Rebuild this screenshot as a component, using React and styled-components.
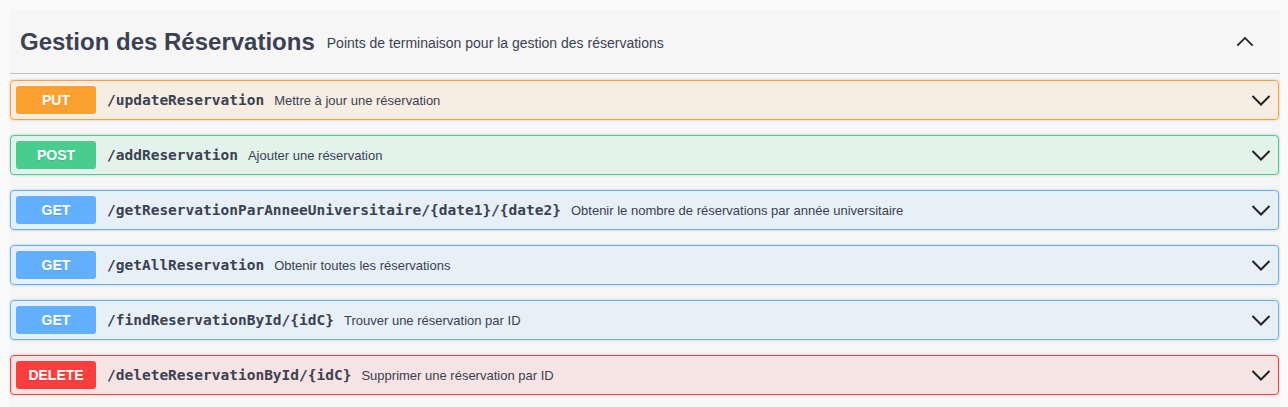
import React from "react";
import styled, { createGlobalStyle } from "styled-components";

const methods = {
  PUT: { color: "#fca130", bg: "rgba(252,161,48,.1)" },
  POST: { color: "#49cc90", bg: "rgba(73,204,144,.1)" },
  GET: { color: "#61affe", bg: "rgba(97,175,254,.1)" },
  DELETE: { color: "#f93e3e", bg: "rgba(249,62,62,.1)" },
};

const ops = [
  { method: "PUT", path: "/updateReservation", desc: "Mettre à jour une réservation" },
  { method: "POST", path: "/addReservation", desc: "Ajouter une réservation" },
  {
    method: "GET",
    path: "/getReservationParAnneeUniversitaire/{date1}/{date2}",
    desc: "Obtenir le nombre de réservations par année universitaire",
  },
  { method: "GET", path: "/getAllReservation", desc: "Obtenir toutes les réservations" },
  { method: "GET", path: "/findReservationById/{idC}", desc: "Trouver une réservation par ID" },
  { method: "DELETE", path: "/deleteReservationById/{idC}", desc: "Supprimer une réservation par ID" },
];

const GlobalStyle = createGlobalStyle`
  body {
    margin: 0;
    background: #fafafa;
    font-family: "Liberation Sans", Arial, sans-serif;
    color: #3b4151;
  }
`;

const Page = styled.div`
  padding: 10px 8px 0 10px;
`;

const Section = styled.section`
  background: #f6f6f6;
  min-height: 397px;
`;

const TagHeader = styled.h3`
  display: flex;
  align-items: center;
  margin: 0 0 6px;
  height: 64px;
  box-sizing: border-box;
  padding: 0 26px 0 10px;
  border-bottom: 1px solid rgba(59, 65, 81, 0.3);
  font-size: 24px;
  font-weight: 700;
  color: #3b4151;
`;

const TagTitle = styled.span`
  margin-top: 1px;
`;

const TagSmall = styled.small`
  flex: 1;
  font-size: 14px;
  font-weight: 400;
  padding: 0 12px;
  margin-top: 3px;
`;

const Chevron = styled.svg`
  width: ${(p) => p.$size}px;
  height: ${(p) => p.$size}px;
  flex-shrink: 0;
  fill: none;
  stroke: #222;
  stroke-width: 2;
`;

const Block = styled.div`
  display: flex;
  align-items: center;
  height: 40px;
  box-sizing: border-box;
  margin: 0 1px 15px 0;
  padding: 5px 7px 5px 5px;
  border: 1px solid ${(p) => methods[p.$m].color};
  background: ${(p) => methods[p.$m].bg};
  border-radius: 4px;
  box-shadow: 0 0 3px rgba(0, 0, 0, 0.19);
`;

const Method = styled.span`
  min-width: 80px;
  height: 28px;
  line-height: 28px;
  text-align: center;
  border-radius: 3px;
  background: ${(p) => methods[p.$m].color};
  color: #fff;
  font-size: 14px;
  font-weight: 700;
  text-shadow: 0 1px 0 rgba(0, 0, 0, 0.1);
`;

const Path = styled.span`
  padding: 0 10px 0 11px;
  font-family: "DejaVu Sans Mono", "Liberation Mono", monospace;
  font-size: 14.5px;
  font-weight: 700;
  color: #3b4151;
`;

const Desc = styled.span`
  flex: 1;
  font-size: 13px;
  color: #3b4151;
`;

const Down = () => (
  <Chevron $size={20} viewBox="0 0 20 20">
    <path d="M1.5 6l8.5 8.5L18.5 6" />
  </Chevron>
);

const Up = () => (
  <Chevron $size={18} viewBox="0 0 20 20">
    <path d="M1.5 14l8.5-8.5L18.5 14" />
  </Chevron>
);

export default function App() {
  return (
    <Page>
      <GlobalStyle />
      <Section>
        <TagHeader>
          <TagTitle>Gestion des Réservations</TagTitle>
          <TagSmall>Points de terminaison pour la gestion des réservations</TagSmall>
          <Up />
        </TagHeader>
        {ops.map((op) => (
          <Block key={op.path} $m={op.method}>
            <Method $m={op.method}>{op.method}</Method>
            <Path>{op.path}</Path>
            <Desc>{op.desc}</Desc>
            <Down />
          </Block>
        ))}
      </Section>
    </Page>
  );
}
